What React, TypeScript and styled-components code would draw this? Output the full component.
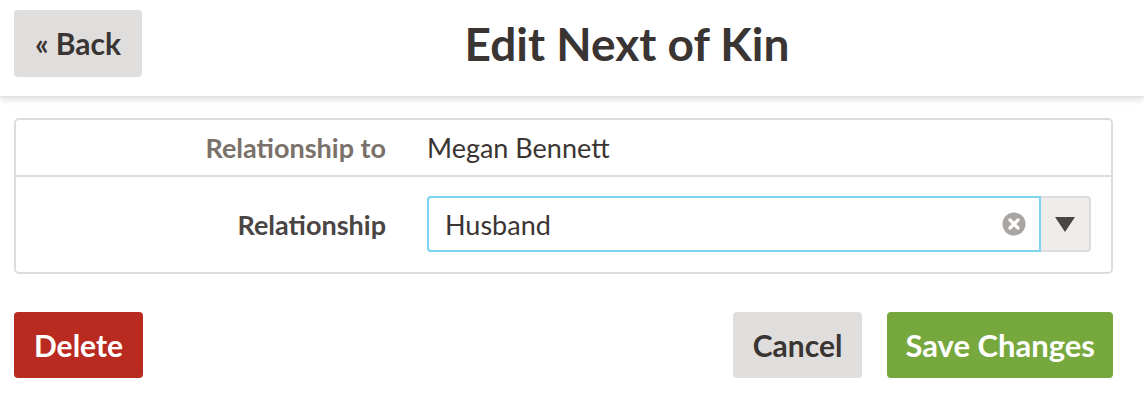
import React from 'react'
import styled, { createGlobalStyle } from 'styled-components'

const GlobalStyle = createGlobalStyle`
	html, body {
		margin: 0;
		padding: 0;
		background: #ffffff;
	}
	body {
		font-family: Lato, 'Open Sans', sans-serif;
		color: #3a3533;
	}
`

const Header = styled.header`
	display: flex;
	align-items: center;
	height: 97px;
	padding: 0 32px 0 14px;
	box-sizing: border-box;
	border-bottom: 1px solid #e2e2e2;
	box-shadow: 0 3px 6px rgba(0, 0, 0, 0.12);
`

const Title = styled.h1`
	flex: 1;
	margin: -9px 0 0;
	text-align: center;
	font-size: 46px;
	font-weight: 700;
	color: #3a3533;
`

const Button = styled.button<{ $variant: 'plain' | 'danger' | 'success' }>`
	height: 66px;
	padding: ${(p) => (p.$variant === 'success' ? '0 18px' : '0 20px')};
	border: none;
	border-radius: 4px;
	font-family: inherit;
	font-size: ${(p) => (p.$variant === 'success' ? '31px' : '30px')};
	font-weight: 700;
	white-space: nowrap;
	cursor: pointer;
	background: ${(p) =>
		p.$variant === 'danger' ? '#b92b20' : p.$variant === 'success' ? '#76a83d' : '#e0dedd'};
	color: ${(p) => (p.$variant === 'plain' ? '#3a3533' : '#ffffff')};
`

const BackButton = styled(Button)`
	width: 128px;
	height: 67px;
	margin-top: -10px;
`

const Content = styled.main`
	padding: 21px 31px 0 14px;
`

const Card = styled.div`
	border: 2px solid #dddcdb;
	border-radius: 5px;
`

const Row = styled.div<{ $divider?: boolean }>`
	display: grid;
	grid-template-columns: 370px 1fr;
	column-gap: 41px;
	align-items: center;
	padding: ${(p) => (p.$divider ? '0' : '19px 0 20px')};
	height: ${(p) => (p.$divider ? '55px' : 'auto')};
	border-bottom: ${(p) => (p.$divider ? '2px solid #dddcdb' : 'none')};
	padding-right: 20px;
`

const Label = styled.div<{ $muted?: boolean }>`
	text-align: right;
	font-size: 27px;
	font-weight: 700;
	color: ${(p) => (p.$muted ? '#7a716a' : '#4a4543')};
`

const Value = styled.div`
	font-size: 27px;
	color: #3a3533;
`

const Select = styled.div`
	display: flex;
	height: 56px;
`

const Input = styled.div`
	flex: 1;
	display: flex;
	align-items: center;
	justify-content: space-between;
	padding: 0 13px 0 16px;
	border: 2px solid #7ad4ef;
	border-radius: 4px 0 0 4px;
	font-size: 27px;
	color: #3a3533;
`

const Toggle = styled.div`
	width: 48px;
	display: flex;
	align-items: center;
	justify-content: center;
	background: #eeedec;
	border: 2px solid #dddcdb;
	border-left: none;
	border-radius: 0 4px 4px 0;
`

const Actions = styled.div`
	display: flex;
	align-items: center;
	gap: 25px;
	padding: 38px 31px 0 14px;
`

const Spacer = styled.div`
	flex: 1;
`

const ClearIcon = () => (
	<svg width='24' height='24' viewBox='0 0 24 24'>
		<circle cx='12' cy='12' r='11.5' fill='#a9a5a2' />
		<path d='M8 8 L16 16 M16 8 L8 16' stroke='#ffffff' strokeWidth='3.2' strokeLinecap='round' />
	</svg>
)

const Caret = () => (
	<svg width='22' height='17' viewBox='0 0 22 17'>
		<path d='M1 1 H21 L11 16 Z' fill='#4a4543' />
	</svg>
)

const App = (): JSX.Element => {
	return (
		<>
			<GlobalStyle />
			<Header>
				<BackButton $variant='plain'>« Back</BackButton>
				<Title>Edit Next of Kin</Title>
			</Header>
			<Content>
				<Card>
					<Row $divider>
						<Label $muted>Relationship to</Label>
						<Value>Megan Bennett</Value>
					</Row>
					<Row>
						<Label>Relationship</Label>
						<Select>
							<Input>
								<span>Husband</span>
								<ClearIcon />
							</Input>
							<Toggle>
								<Caret />
							</Toggle>
						</Select>
					</Row>
				</Card>
			</Content>
			<Actions>
				<Button $variant='danger'>Delete</Button>
				<Spacer />
				<Button $variant='plain'>Cancel</Button>
				<Button $variant='success'>Save Changes</Button>
			</Actions>
		</>
	)
}

export default App
